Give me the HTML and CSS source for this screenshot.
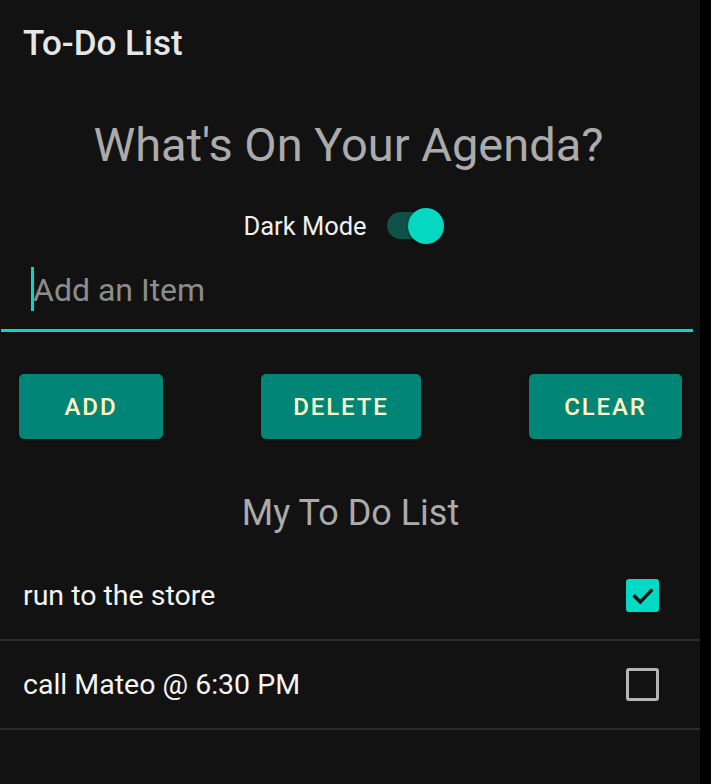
FILE: index.html
```html
<!DOCTYPE html>
<html>
<head>
<meta charset="utf-8">
<link rel="stylesheet" href="styles.css">
</head>
<body>
<div class="app">
  <header class="appbar"><span class="appbar-title">To-Do List</span></header>
  <h1 class="agenda">What's On Your Agenda?</h1>
  <div class="mode-row">
    <span class="mode-label">Dark Mode</span>
    <span class="switch"><span class="track"></span><span class="thumb"></span></span>
  </div>
  <div class="input-wrap">
    <span class="cursor"></span><span class="placeholder">Add an Item</span>
  </div>
  <div class="buttons">
    <button class="btn btn-add">ADD</button>
    <button class="btn btn-delete">DELETE</button>
    <button class="btn btn-clear">CLEAR</button>
  </div>
  <h2 class="list-title">My To Do List</h2>
  <ul class="list">
    <li class="item"><span class="item-text">run to the store</span>
      <span class="check checked"><svg viewBox="0 0 24 24" width="26" height="26"><path d="M4.5 12.5l5 5 10-10.5" fill="none" stroke="#121212" stroke-width="3.2" stroke-linecap="square"/></svg></span>
    </li>
    <li class="item"><span class="item-text">call Mateo @ 6:30 PM</span>
      <span class="check"></span>
    </li>
  </ul>
</div>
</body>
</html>
```
FILE: styles.css
```css
* { box-sizing: border-box; }
html, body { margin: 0; padding: 0; background: #000; }
body { font-family: Roboto, "Noto Sans", sans-serif; }
.app {
  width: 700px;
  height: 784px;
  background: #121212;
  display: flex;
  flex-direction: column;
}
.appbar {
  height: 88px;
  display: flex;
  align-items: center;
  padding-left: 23px;
}
.appbar-title {
  font-size: 35px;
  font-weight: 500;
  color: #e6e6e6;
  margin-top: -1px;
}
.agenda {
  margin: 31px 0 0;
  text-align: center;
  font-size: 47px;
  font-weight: 400;
  color: #ababab;
  line-height: 52px;
  padding-right: 3px;
}
.mode-row {
  margin-top: 35px;
  height: 40px;
  display: flex;
  justify-content: center;
  align-items: center;
  gap: 20px;
  padding-right: 12px;
}
.mode-label { font-size: 25.5px; color: #f0f0f0; }
.switch { position: relative; width: 58px; height: 40px; display: inline-block; }
.track {
  position: absolute; left: 0; top: 6px; width: 50px; height: 27px;
  border-radius: 14px; background: #0f5047;
}
.thumb {
  position: absolute; left: 21px; top: 2px; width: 36px; height: 36px;
  border-radius: 50%; background: #04d8c3;
  box-shadow: 0 1px 3px rgba(0,0,0,0.5);
}
.input-wrap {
  margin: 20px 7px 0 1px;
  height: 66px;
  border-bottom: 3px solid #03dac5;
  display: flex;
  align-items: flex-start;
  padding-top: 1px;
  padding-left: 30px;
}
.cursor { width: 3px; height: 44px; background: #03dac5; }
.placeholder { font-size: 32px; color: #8c8c8c; line-height: 44px; margin-top: 1px; margin-left: -1px; }
.buttons {
  margin-top: 42px;
  display: flex;
  justify-content: space-between;
  padding: 0 18px 0 19px;
}
.btn {
  height: 65px;
  border: none;
  border-radius: 5px;
  background: #018577;
  color: #fff8c4;
  font-family: Roboto, sans-serif;
  font-weight: 500;
  font-size: 24px;
  letter-spacing: 1.9px;
  box-shadow: 0 2px 3px rgba(0,0,0,0.4);
  padding: 0;
}
.btn-add { width: 144px; }
.btn-delete { width: 160px; margin-right: 10px; }
.btn-clear { width: 153px; }
.list-title {
  margin: 54px 0 0;
  text-align: center;
  font-size: 36px;
  font-weight: 400;
  color: #ababab;
  line-height: 40px;
  padding-left: 1px;
}
.list { list-style: none; margin: 19px 0 0; padding: 0; }
.item {
  height: 89px;
  border-bottom: 2px solid #2c2c2c;
  display: flex;
  align-items: center;
  justify-content: space-between;
  padding: 0 41px 0 23px;
}
.item-text { font-size: 28.5px; color: #f5f5f5; }
.check {
  width: 33px; height: 33px;
  border: 3px solid #b5b5b5;
  border-radius: 3px;
  display: flex; align-items: center; justify-content: center;
}
.check.checked { background: #03dac5; border-color: #03dac5; }
```
